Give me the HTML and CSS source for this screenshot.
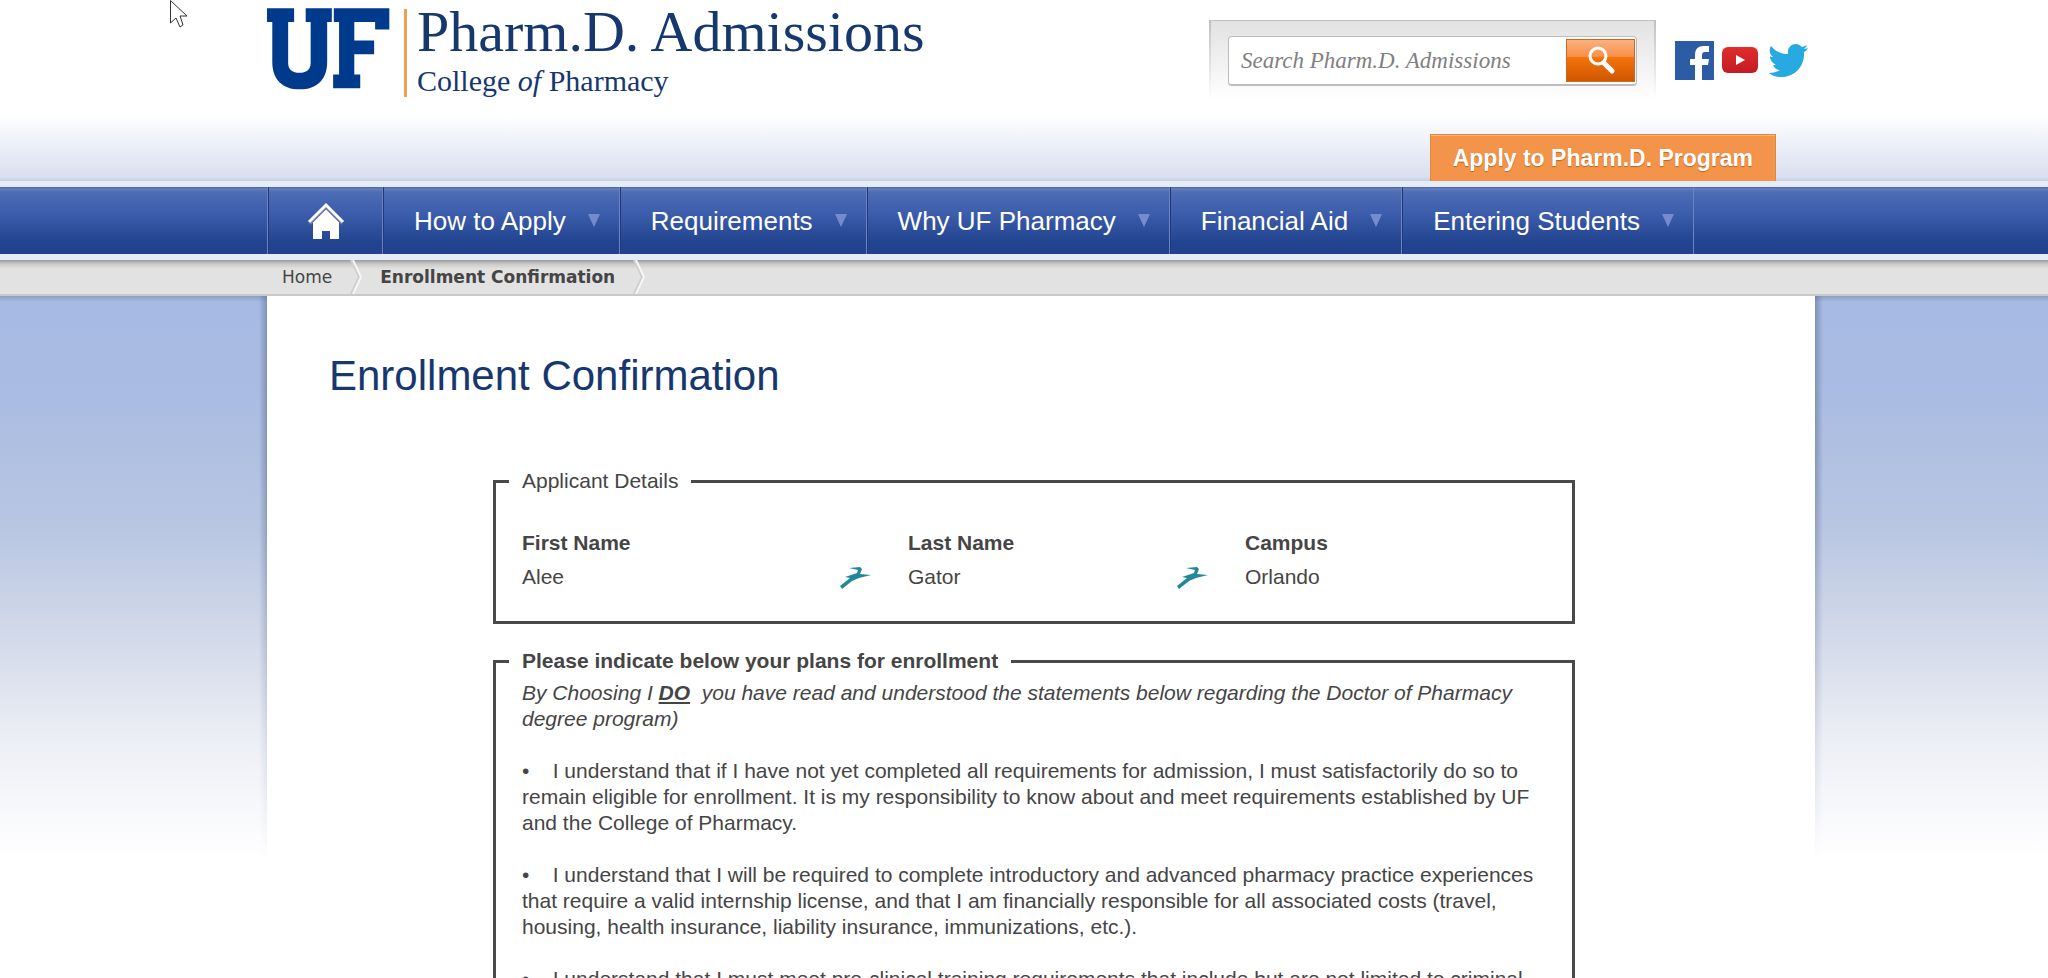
FILE: index.html
```html
<!DOCTYPE html>
<html lang="en">
<head>
<meta charset="utf-8">
<title>Enrollment Confirmation - Pharm.D. Admissions</title>
<link rel="stylesheet" href="styles.css">
</head>
<body>
<div class="page">
  <header class="header">
    <div class="header-top">
      <a class="brand" href="#">
        <svg class="brand-logo" viewBox="348 26 372 246" role="img" aria-label="UF">
          <path fill="#003a8c" d="M348 26H430V67H412V192C412 212 426 221 446 221S480 212 480 192V67H465V26H544V67H530V188C530 240 500 271 447 271S364 240 364 188V67H348Z"/>
          <path fill="#003a8c" d="M550 26H718V90H675V67H612V123H672V165H612V226H630V268H548V226H566V67H550Z"/>
        </svg>
        <span class="brand-text">
          <span class="brand-title">Pharm.D. Admissions</span>
          <span class="brand-sub">College <em>of</em> Pharmacy</span>
        </span>
      </a>
      <div class="tools">
        <form class="search">
          <div class="search-box">
            <input class="search-input" type="search" aria-label="Search Pharm.D. Admissions" placeholder="Search Pharm.D. Admissions">
            <button class="search-button" type="button" aria-label="Search">
              <svg width="30" height="30" viewBox="0 0 30 30"><ellipse cx="12" cy="10" rx="8" ry="8" fill="none" stroke="#fff" stroke-width="3"/><path d="M18 17L26 25" stroke="#fff" stroke-width="5" stroke-linecap="round"/></svg>
            </button>
          </div>
        </form>
        <div class="social">
          <a href="#" aria-label="Facebook"><svg width="39" height="39" viewBox="0 0 39 39"><path fill="#2d5ca6" d="M0 0H39V39H0Z"/><path fill="#fff" d="M20 39V24H15V18H20V14C20 8 23 5 29 5H34V11H30C28 11 27 12 27 14V18H34L33 24H27V39Z"/></svg></a>
          <a href="#" aria-label="YouTube"><svg width="36" height="26" viewBox="0 0 36 26"><defs><linearGradient id="yt" x2="0" y2="1"><stop stop-color="#e02c2c"/><stop offset="1" stop-color="#c41b26"/></linearGradient></defs><rect width="36" height="26" rx="6" fill="url(#yt)"/><path fill="#fff" d="M14 8L23 13L14 18Z"/></svg></a>
          <a class="social-last" href="#" aria-label="Twitter"><svg width="39" height="33" viewBox="0 0 39 33"><path fill="#27a9e1" d="M39 4C38 6 37 7 35 8C36 22 26 33 12 33C8 33 3 32 0 29C4 29 8 28 11 26C8 26 5 24 4 21H7C4 19 1 17 1 12C2 13 3 13 4 13C0 10 0 5 2 2C6 7 12 10 19 10C18 4 22 0 27 0C29 0 31 1 33 3C35 2 37 2 38 1C38 2 36 4 35 5C37 5 38 4 39 4Z"/></svg></a>
        </div>
      </div>
    </div>
    <div class="apply-row"><a class="apply" href="#">Apply to Pharm.D. Program</a></div>
  </header>

  <nav class="nav" aria-label="Main">
    <ul class="nav-list">
      <li><a class="nav-home" href="#" aria-label="Home"><svg width="38" height="38" viewBox="0 0 38 38"><path fill="#fff" d="M6 20L19 7L32 20V37H23V29H15V37H6Z"/><path fill="none" stroke="#6d7ba8" stroke-width="2" d="M3 22L19 6L35 22"/><path fill="none" stroke="#fff" stroke-width="3" d="M2 20L19 3L36 20"/></svg></a></li>
      <li><a class="nav-link" href="#">How to Apply<span class="caret"></span></a></li>
      <li><a class="nav-link" href="#">Requirements<span class="caret"></span></a></li>
      <li><a class="nav-link" href="#">Why UF Pharmacy<span class="caret"></span></a></li>
      <li><a class="nav-link" href="#">Financial Aid<span class="caret"></span></a></li>
      <li><a class="nav-link" href="#">Entering Students<span class="caret"></span></a></li>
    </ul>
  </nav>

  <nav class="crumbs" aria-label="Breadcrumb">
    <a href="#">Home</a>
    <svg class="crumb-sep" width="12" height="34" viewBox="0 0 12 34"><path d="M1 0L9 17L1 34" fill="none" stroke="#cfcfcf" stroke-width="2"/><path d="M3 0L11 17L3 34" fill="none" stroke="#f6f6f6" stroke-width="2"/></svg>
    <strong>Enrollment Confirmation</strong>
    <svg class="crumb-sep" width="12" height="34" viewBox="0 0 12 34"><path d="M1 0L9 17L1 34" fill="none" stroke="#cfcfcf" stroke-width="2"/><path d="M3 0L11 17L3 34" fill="none" stroke="#f6f6f6" stroke-width="2"/></svg>
  </nav>

  <div class="backdrop">
    <main class="content">
      <h1 class="title">Enrollment Confirmation</h1>
      <form class="forms">
        <fieldset class="group">
          <legend>Applicant Details</legend>
          <dl class="details">
            <div><dt>First Name</dt><dd>Alee
              <svg class="mark" width="32" height="23" viewBox="0 0 32 23"><path fill="#23879b" d="M0 20L10 12L5 11L17 7L18 4L9 2L20 1L22 3L20 8L31 9L19 12L12 15L2 23Z"/></svg></dd></div>
            <div><dt>Last Name</dt><dd>Gator
              <svg class="mark" width="32" height="23" viewBox="0 0 32 23"><path fill="#23879b" d="M0 20L10 12L5 11L17 7L18 4L9 2L20 1L22 3L20 8L31 9L19 12L12 15L2 23Z"/></svg></dd></div>
            <div><dt>Campus</dt><dd>Orlando</dd></div>
          </dl>
        </fieldset>
        <fieldset class="group plans">
          <legend><b>Please indicate below your plans for enrollment</b></legend>
          <p><i>By Choosing I <b><u>DO</u></b>&nbsp; you have read and understood the statements below regarding the Doctor of Pharmacy degree program)</i></p>
          <p>•&nbsp;&nbsp;&nbsp; I understand that if I have not yet completed all requirements for admission, I must satisfactorily do so to remain eligible for enrollment. It is my responsibility to know about and meet requirements established by UF and the College of Pharmacy.</p>
          <p>•&nbsp;&nbsp;&nbsp; I understand that I will be required to complete introductory and advanced pharmacy practice experiences that require a valid internship license, and that I am financially responsible for all associated costs (travel, housing, health insurance, liability insurance, immunizations, etc.).</p>
          <p>•&nbsp;&nbsp;&nbsp; I understand that I must meet pre-clinical training requirements that include but are not limited to criminal</p>
        </fieldset>
      </form>
    </main>
  </div>
  <svg class="pointer" width="18" height="28" viewBox="0 0 18 28" aria-hidden="true"><path fill="#fff" stroke="#333" d="M.5 .5V23L6 18L10 27L13 25L10 16H17Z"/></svg>
</div>
</body>
</html>
```
FILE: styles.css
```css
* { box-sizing: border-box; }

body {
  margin: 0;
  background: #fff;
  color: #454545;
  font-family: "Liberation Sans", Arial, sans-serif;
  font-size: 21px;
  line-height: 26px;
}

a { color: inherit; text-decoration: none; }
svg { display: block; }

.page {
  position: relative;
  height: 100vh;
  overflow: hidden;
}

.header, .nav, .crumbs, .backdrop { padding: 0 233px 0 267px; }

.header {
  background: linear-gradient(#fff 115px, #f0f2fa 140px, #d9dff0 177px, #c8cee0);
}

.header-top {
  display: flex;
  justify-content: space-between;
  align-items: flex-start;
}

.brand { display: flex; color: #17376f; }
.brand-logo { width: 123px; height: 82px; margin-top: 8px; }

.brand-text {
  display: flex;
  flex-direction: column;
  margin-left: 14px;
  padding-left: 13px;
  background: linear-gradient(#f0a050, #f0a050) 0 9px / 3px 88px no-repeat;
  font-family: "Liberation Serif", "Times New Roman", serif;
  white-space: nowrap;
}

.brand-title { font-size: 58px; line-height: 64px; }
.brand-sub { font-size: 30px; line-height: 34px; }

.tools { display: flex; gap: 19px; padding: 20px 7px 0 0; }

.search {
  width: 447px;
  padding: 15px 17px 10px;
  background: linear-gradient(#e2e2e2, #fff);
  border: 2px solid #c4c4c4;
  border-width: 1px 2px 0;
  border-image: linear-gradient(#bfbfbf, #fff) 1 1 0;
}

.search-box {
  display: flex;
  height: 50px;
  padding: 2px 1px;
  background: #fff;
  border: 1px solid #bdbdbd;
  border-bottom-width: 2px;
  border-radius: 4px;
}

.search-input {
  flex: 1;
  min-width: 0;
  padding: 0 0 0 11px;
  border: 0;
  background: none;
  font: italic 23px "Liberation Serif", "Times New Roman", serif;
}

.search-input::placeholder { color: #808080; opacity: 1; }

.search-button {
  display: grid;
  place-items: center;
  width: 69px;
  padding: 0;
  border: 1px solid #c96a1c;
  background: linear-gradient(#fbb080, #f8914a 40%, #f5730d 42%, #cf5600);
}

.social { display: flex; align-items: center; gap: 8px; height: 80px; }
.social-last { margin-left: 3px; }

.apply-row { display: flex; justify-content: flex-end; padding: 34px 39px 0 0; }

.apply {
  padding: 10px 22px;
  border: 1px solid #d98a3c;
  border-bottom: 0;
  background: #f4934a;
  box-shadow: inset 0 1px #fbb578;
  color: #fff;
  font-size: 23px;
  font-weight: bold;
  text-shadow: 0 1px 1px #b06a20;
}

.nav {
  border: solid #e6ebf8;
  border-width: 6px 0;
  background: linear-gradient(#4a62a4 0, #6580c4 2px, #4e6cb6 5px, #3b5dab 40%, #23448f 82%, #1f4190);
}

.nav-list { display: flex; margin: 0; padding: 0; list-style: none; }
.nav-list li { border-left: 1px solid #6b83c4; }
.nav-list li:last-child { border-right: 1px solid #6b83c4; }

.nav-home, .nav-link {
  display: flex;
  align-items: center;
  height: 67px;
  border-left: 1px solid #21397a;
  color: #fff;
}

.nav-home { justify-content: center; width: 114px; }

.nav-link {
  gap: 22px;
  padding: 0 19px 0 30px;
  font-size: 26px;
  white-space: nowrap;
}

.caret {
  border: 6px solid transparent;
  border-top: 13px solid #748ccf;
  border-bottom: 0;
}

.crumbs {
  display: flex;
  align-items: center;
  height: 36px;
  padding-left: 282px;
  border-bottom: 2px solid #c9c9c9;
  background: linear-gradient(#989b9f, #cbcac8 4px, #e2e2e2 9px);
  font-family: "DejaVu Sans", Verdana, sans-serif;
  font-size: 17px;
}

.crumb-sep { margin: 0 18px; }

.backdrop {
  background: linear-gradient(#8f9fc4 0, #a7bae3 6px, #a9bbe2 90px, #b8c6e2 230px, #d5dbea 352px, #edeff6 446px, #fff 564px);
}

.content {
  position: relative;
  min-height: 800px;
  padding: 50px 240px 40px 226px;
  background: #fff;
}

/* Edge shadows that fade out with the backdrop */
.content::before, .content::after {
  content: "";
  position: absolute;
  top: 0;
  width: 8px;
  height: 564px;
  background: linear-gradient(to right, transparent, rgba(70, 85, 125, .4));
  mask-image: linear-gradient(#000 30%, transparent);
}
.content::before { right: 100%; }
.content::after { left: 100%; rotate: y 180deg; }

.title {
  margin: 0 0 62px -164px;
  color: #17376f;
  font-size: 42px;
  font-weight: normal;
  line-height: 60px;
}

.group {
  min-width: 0;
  margin: 0 0 24px;
  padding: 32px 26px 27px;
  border: 3px solid #484a48;
}

.group legend { margin-left: -13px; padding: 0 13px; }

.details {
  display: grid;
  grid-template-columns: 386fr 337fr 301fr;
  margin: 0;
  line-height: 34px;
}

.details dt { font-weight: bold; }
.details dd { display: flex; justify-content: space-between; align-items: center; margin: 0; }
.mark { margin-right: 36px; }

.plans { padding-top: 6px; }
.plans p { margin: 0 0 26px; }

.pointer { position: absolute; top: 0; left: 170px; }
```
